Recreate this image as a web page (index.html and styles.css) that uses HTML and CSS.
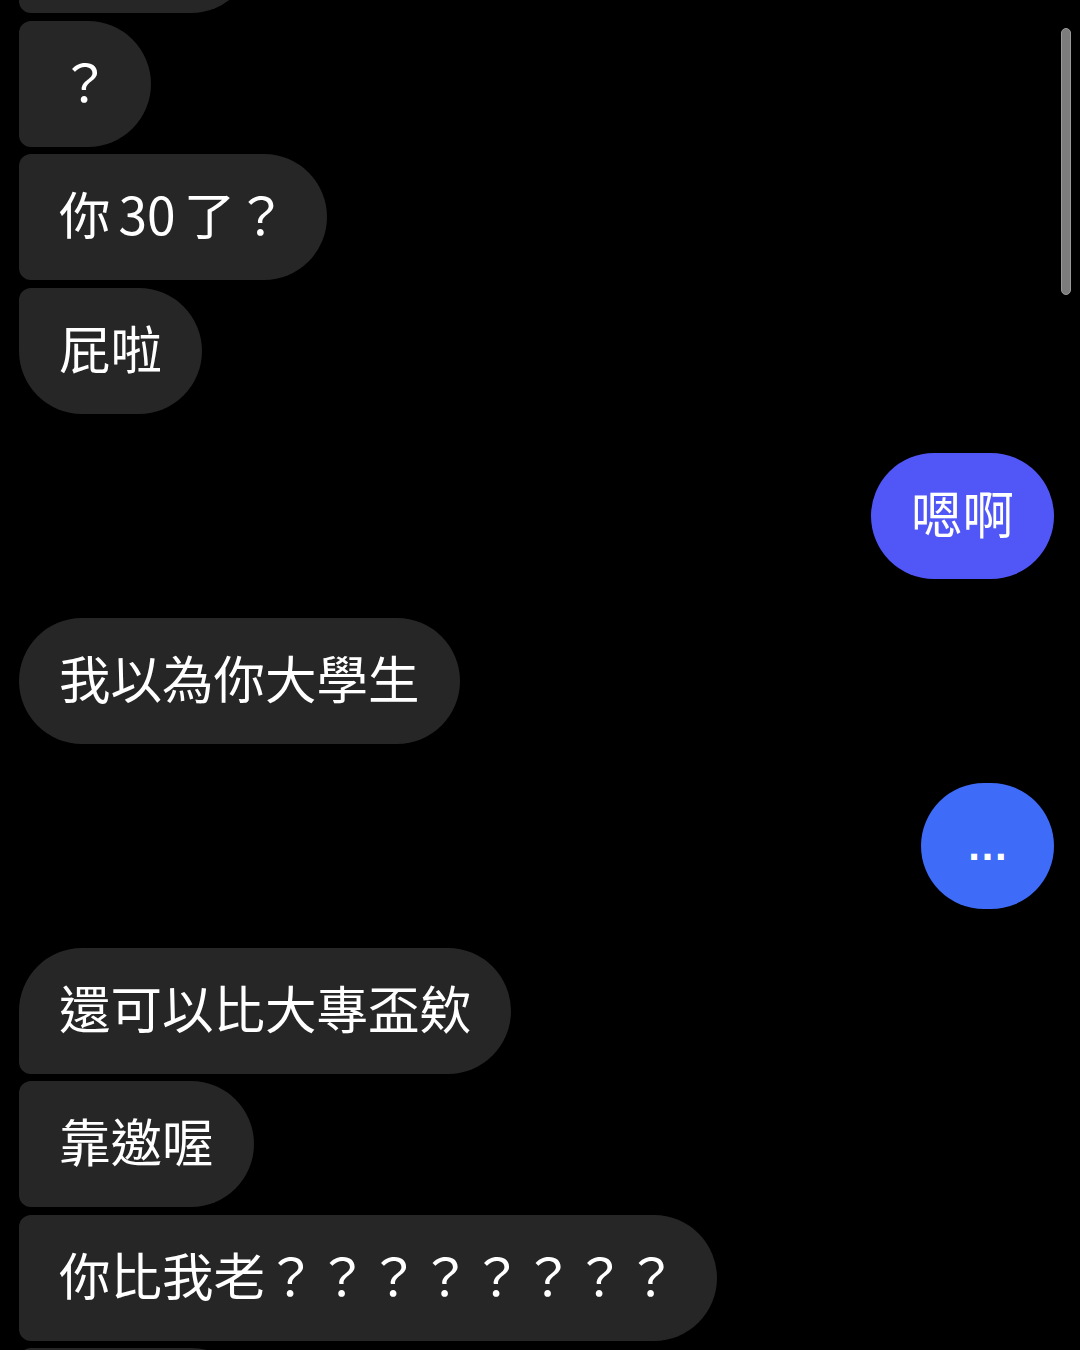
FILE: index.html
```html
<!DOCTYPE html>
<html lang="zh-Hant">
<head>
<meta charset="utf-8">
<title>Chat</title>
<link rel="stylesheet" href="styles.css">
</head>
<body>
<div class="thread">
  <div class="messages">
    <div class="group in">
      <div class="bubble first">真的嗎</div>
      <div class="bubble mid">？</div>
      <div class="bubble mid">你 30 了？</div>
      <div class="bubble last">屁啦</div>
    </div>
    <div class="group out">
      <div class="bubble sent violet">嗯啊</div>
    </div>
    <div class="group in">
      <div class="bubble single">我以為你大學生</div>
    </div>
    <div class="group out">
      <div class="bubble sent blue dots">…</div>
    </div>
    <div class="group in">
      <div class="bubble first">還可以比大專盃欸</div>
      <div class="bubble mid">靠邀喔</div>
      <div class="bubble mid">你比我老？？？？？？？？</div>
      <div class="bubble mid">哈哈哈</div>
    </div>
  </div>
  <div class="scrollbar"></div>
</div>
</body>
</html>
```

FILE: styles.css
```css
* {
  box-sizing: border-box;
}

html, body {
  margin: 0;
  padding: 0;
  background: #000;
}

.thread {
  position: relative;
  width: 1080px;
  height: 1350px;
  overflow: hidden;
  background: #000;
  font-family: "Noto Sans CJK TC", "Noto Sans CJK SC", sans-serif;
  color: #fff;
}

.messages {
  display: flex;
  flex-direction: column;
  gap: 39px;
  margin-top: -113px;
  padding: 0 26px 0 19px;
}

.group {
  display: flex;
  flex-direction: column;
  gap: 7.5px;
}

.group.in {
  align-items: flex-start;
}

.group.out {
  align-items: flex-end;
}

.bubble {
  display: flex;
  align-items: center;
  height: 126px;
  padding: 0 40px 8px;
  font-size: 51.5px;
  line-height: 62px;
  white-space: pre;
  word-spacing: -3.5px;
  background: #262626;
  color: #fff;
  border-radius: 63px;
}

.in .bubble.first {
  border-radius: 63px 63px 63px 12px;
}

.in .bubble.mid {
  border-radius: 12px 63px 63px 12px;
}

.in .bubble.last {
  border-radius: 12px 63px 63px 63px;
}

.in .bubble.single {
  border-radius: 63px;
}

.bubble.sent {
  border-radius: 63px;
}

.bubble.violet {
  background: #5157f6;
}

.bubble.blue {
  background: #3e6cf8;
}

.bubble.dots {
  width: 133px;
  padding: 0;
  justify-content: center;
  font-family: "Liberation Sans", sans-serif;
  font-weight: bold;
  font-size: 42px;
}

.scrollbar {
  position: absolute;
  top: 28px;
  right: 9px;
  width: 10px;
  height: 267px;
  border-radius: 5px;
  background: #7c7c7c;
  border: 1px solid #9a9a9a;
}
```
